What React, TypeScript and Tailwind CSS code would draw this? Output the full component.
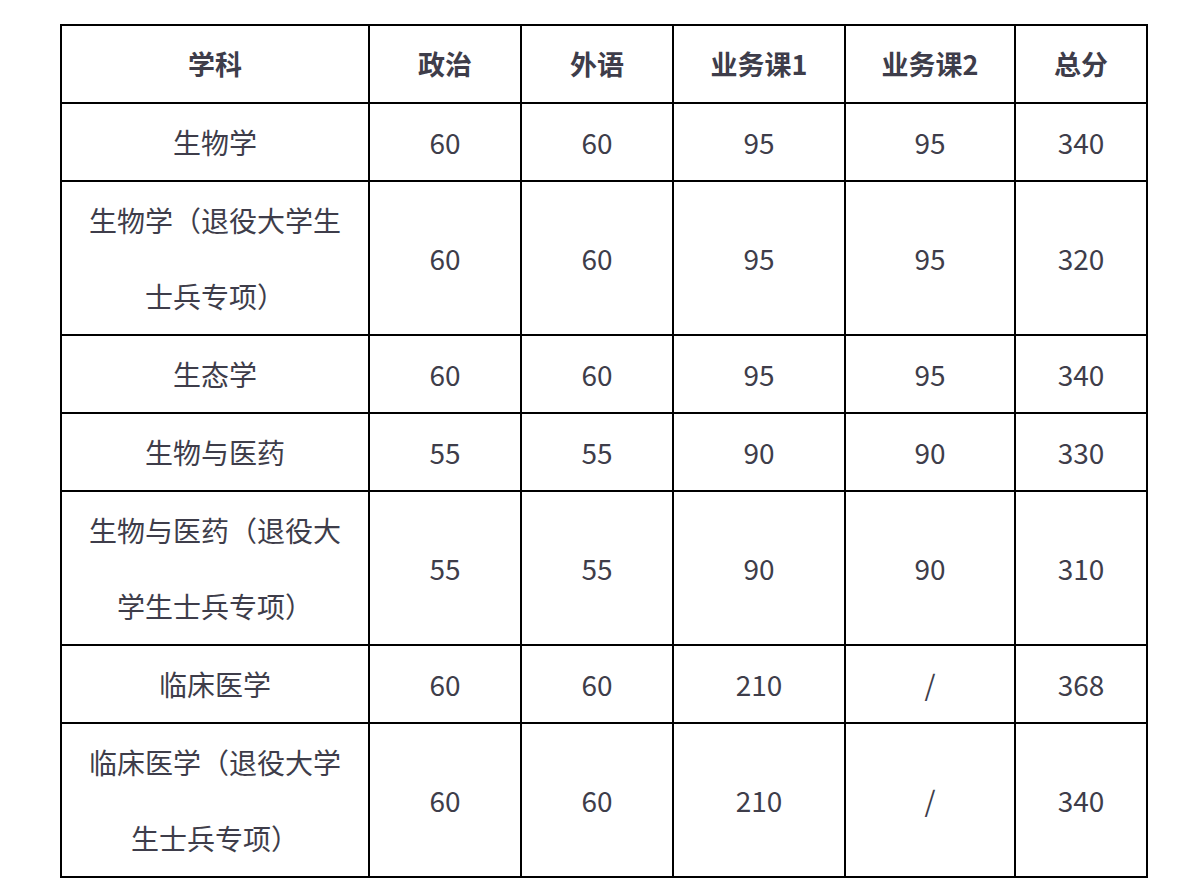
import React from "react";

const rows: [string, string, string, string, string, string][] = [
  ["生物学", "60", "60", "95", "95", "340"],
  ["生物学（退役大学生士兵专项）", "60", "60", "95", "95", "320"],
  ["生态学", "60", "60", "95", "95", "340"],
  ["生物与医药", "55", "55", "90", "90", "330"],
  ["生物与医药（退役大学生士兵专项）", "55", "55", "90", "90", "310"],
  ["临床医学", "60", "60", "210", "/", "368"],
  ["临床医学（退役大学生士兵专项）", "60", "60", "210", "/", "340"],
];

const headers = ["学科", "政治", "外语", "业务课1", "业务课2", "总分"];
const widths = ["w-[308px]", "w-[152px]", "w-[152px]", "w-[172px]", "w-[170px]", "w-[132px]"];

export default function App() {
  return (
    <div
      className="min-h-[896px] w-[1198px] bg-white pt-[24px] pl-[60px]"
      style={{ fontFamily: '"Noto Sans CJK SC", "Noto Sans", sans-serif' }}
    >
      <table className="border-collapse border-2 border-black text-[#3e3d4a] text-[28px] leading-[76px]">
        <colgroup>
          {widths.map((w, i) => (
            <col key={i} className={w} />
          ))}
        </colgroup>
        <thead>
          <tr>
            {headers.map((h, i) => (
              <th key={i} className="border-2 border-black px-5 py-0 text-center font-bold align-middle text-[27px]">
                {h}
              </th>
            ))}
          </tr>
        </thead>
        <tbody>
          {rows.map((r, ri) => (
            <tr key={ri}>
              {r.map((c, ci) => (
                <td key={ci} className="border-2 border-black px-5 py-0 text-center align-middle">
                  {c}
                </td>
              ))}
            </tr>
          ))}
        </tbody>
      </table>
    </div>
  );
}
